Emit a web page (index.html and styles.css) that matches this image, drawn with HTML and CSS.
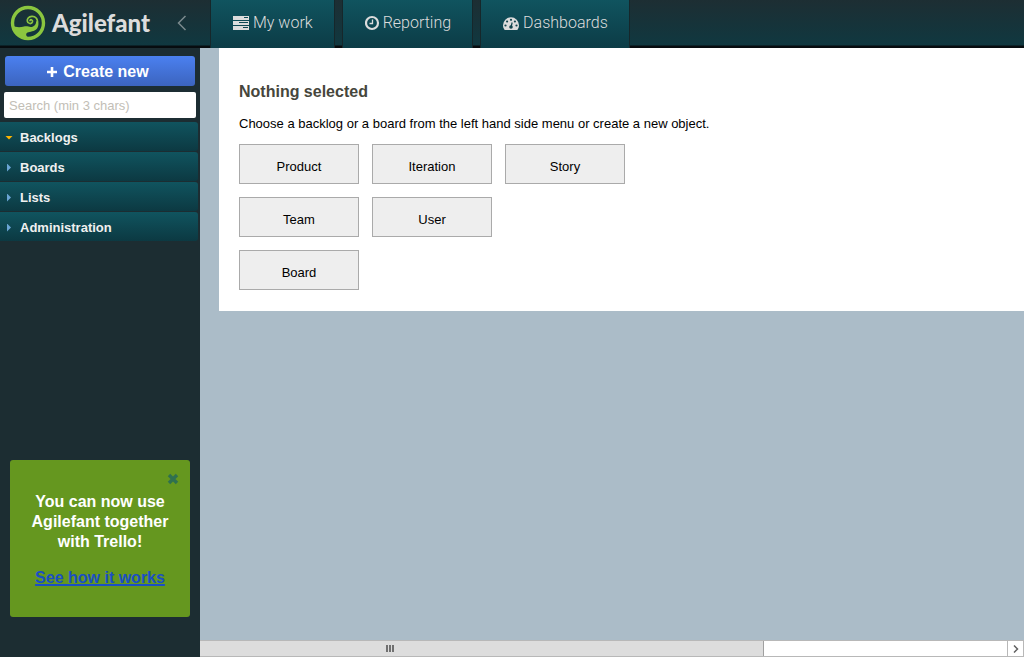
FILE: index.html
```html
<!DOCTYPE html>
<html lang="en">
<head>
<meta charset="utf-8">
<title>Agilefant</title>
<link rel="stylesheet" href="styles.css">
</head>
<body>
<header class="topbar">
  <div class="brand">
    <svg class="brand-mark" viewBox="0 0 36 36" aria-hidden="true">
      <circle cx="18" cy="18" r="15.500" fill="none" stroke="#8bc63f" stroke-width="3.400"/>
      <path d="M27 18.500C28.500 13.500 25 11.200 21.800 11.400C18.500 11.600 17 14 17.300 16.200C17.700 19 21.800 19.400 22.500 16.800C22.900 15 20.900 14 20 15.500" fill="none" stroke="#8bc63f" stroke-width="1.700" stroke-linecap="round"/>
      <path d="M2 20.500C6 22.500 10 22.500 14 21.500C18 20.700 20 23 23 21.500C25.500 20.200 26 18.500 26.200 16.500L28 15.500C29 19 28.500 23.500 25 25.200C21 27.200 17.500 26.500 16.300 28.800C15.600 30.800 17 32 20 33.500C10 35.500 3 29 2 20.500Z" fill="#8bc63f"/>
    </svg>
    <span class="brand-name">Agilefant</span>
    <button class="collapse" aria-label="Collapse menu">
      <svg viewBox="0 0 10 16" aria-hidden="true"><path d="M8.500 1L1.500 8L8.500 15" fill="none" stroke="#7b8a8d" stroke-width="1.500"/></svg>
    </button>
  </div>
  <nav class="tabs">
    <a class="tab" href="#work">
      <svg class="tab-icon" viewBox="0 0 17 16" aria-hidden="true"><path fill="#dcdcdc" fill-rule="evenodd" d="M0 1h16v4h-16zM11 2v1h4v-1zM0 6h16v4h-16zM6 7v1h9v-1zM0 11h16v4h-16zM10 12v1h5v-1z"/></svg>
      <span>My work</span>
    </a>
    <a class="tab" href="#reporting">
      <svg class="tab-icon clock" viewBox="0 0 15 16" aria-hidden="true"><circle cx="7" cy="8" r="6" fill="none" stroke="#dcdcdc" stroke-width="2.200"/><path d="M7.500 4.500V8.500H4.500" fill="none" stroke="#dcdcdc" stroke-width="1.300"/></svg>
      <span>Reporting</span>
    </a>
    <a class="tab" href="#dashboards">
      <svg class="tab-icon" viewBox="0 0 17 16" aria-hidden="true"><path d="M1.700 15C.5 13.500 0 12 0 10.300a8 8 0 0 1 16 0C16 12 15.500 13.500 14.300 15Z" fill="#dcdcdc"/><g fill="#12434c"><circle cx="2.500" cy="10.500" r="1.100"/><circle cx="4.100" cy="6.500" r="1.100"/><circle cx="8" cy="4.800" r="1.100"/><circle cx="11.900" cy="6.500" r="1.100"/><circle cx="13.500" cy="10.500" r="1.100"/><circle cx="8" cy="12" r="1.800"/></g><path d="M8 12L9.200 7.500" stroke="#12434c" stroke-width="1.200"/></svg>
      <span>Dashboards</span>
    </a>
  </nav>
</header>
<div class="workspace">
  <aside class="sidebar">
    <button class="create">
      <svg viewBox="0 0 10 10" aria-hidden="true"><path d="M5 0v10M0 5h10" stroke="#fff" stroke-width="2.600"/></svg>
      <span>Create new</span>
    </button>
    <input class="search" type="text" placeholder="Search (min 3 chars)" aria-label="Search">
    <nav class="menu">
      <a class="menu-item open" href="#backlogs">Backlogs</a>
      <a class="menu-item" href="#boards">Boards</a>
      <a class="menu-item" href="#lists">Lists</a>
      <a class="menu-item" href="#administration">Administration</a>
    </nav>
    <section class="promo">
      <button class="promo-close" aria-label="Close">
        <svg viewBox="0 0 12 12" aria-hidden="true"><path d="M2 2L10 10M10 2L2 10" stroke="#2f7050" stroke-width="3.400"/></svg>
      </button>
      <p class="promo-text">You can now use Agilefant together with Trello!</p>
      <a class="promo-link" href="#trello">See how it works</a>
    </section>
  </aside>
  <main class="content">
    <section class="panel">
      <h1>Nothing selected</h1>
      <p class="hint">Choose a backlog or a board from the left hand side menu or create a new object.</p>
      <div class="choices">
        <div class="choice-row"><button class="choice">Product</button><button class="choice">Iteration</button><button class="choice">Story</button></div>
        <div class="choice-row"><button class="choice">Team</button><button class="choice">User</button></div>
        <div class="choice-row"><button class="choice">Board</button></div>
      </div>
    </section>
    <div class="scrollbar">
      <div class="thumb"><i></i><i></i><i></i></div>
      <button class="scroll-right" aria-label="Scroll right">
        <svg viewBox="0 0 8 8" aria-hidden="true"><path d="M2 0.500L5.500 4L2 7.500" fill="none" stroke="#606060" stroke-width="1.500"/></svg>
      </button>
    </div>
  </main>
</div>
</body>
</html>
```
FILE: styles.css
```css
* { box-sizing: border-box; }
body {
  margin: 0;
  min-height: 100vh;
  display: flex;
  flex-direction: column;
  font-family: "Liberation Sans", Arial, sans-serif;
  font-size: 13px;
  color: #000;
  background: #abbcc8;
}
button { font: inherit; cursor: pointer; }
svg { display: block; }

.topbar {
  height: 48px;
  display: flex;
  background: linear-gradient(#1d2e33, #103840 45px, #070c0f 46px);
}
.brand {
  width: 210px;
  height: 45px;
  padding: 0 22px 0 10px;
  display: flex;
  align-items: center;
}
.brand-mark { width: 36px; height: 36px; }
.brand-name {
  margin-left: 6px;
  font: 900 24px/30px Lato, sans-serif;
  color: #dcdcdc;
}
.collapse {
  margin-left: auto;
  padding: 0;
  border: 0;
  background: none;
}
.collapse svg { width: 12px; height: 16px; }
.tabs { display: flex; gap: 7px; }
.tab {
  height: 48px;
  padding: 0 21px 2px 22px;
  display: flex;
  align-items: center;
  gap: 3px;
  border: solid #16272b;
  border-width: 0 1px;
  background: linear-gradient(#10545f, #0c3c46);
  color: #dcdcdc;
  font: 300 16px/20px Roboto, "Liberation Sans", sans-serif;
  text-decoration: none;
}
.tab-icon { width: 17px; height: 16px; }
.tab-icon.clock { width: 15px; }

.workspace { flex: 1; display: flex; }
.sidebar {
  width: 200px;
  padding: 8px 2px 40px 0;
  display: flex;
  flex-direction: column;
  background: #1c2d32;
}
.create {
  height: 30px;
  margin: 0 3px 0 5px;
  padding: 2px 4px 0 0;
  display: flex;
  align-items: center;
  justify-content: center;
  gap: 6px;
  border: 0;
  border-radius: 3px;
  background: linear-gradient(#4b80f0, #3c64be);
  color: #fff;
  font-size: 16px;
  font-weight: bold;
}
.create svg { width: 10px; height: 10px; }
.search {
  height: 26px;
  margin: 6px 2px 4px 4px;
  padding: 0 5px;
  border: 0;
  border-radius: 2px;
  background: #fff;
  font: 13px "Liberation Sans", Arial, sans-serif;
}
.search::placeholder { color: #c2beb6; opacity: 1; }
.menu { display: flex; flex-direction: column; gap: 1px; }
.menu-item {
  height: 29px;
  padding: 2px 0 0 7px;
  display: flex;
  align-items: center;
  border-radius: 0 3px 3px 0;
  background: linear-gradient(#10545f, #0c3942);
  color: #f0f0f0;
  font-weight: bold;
  text-decoration: none;
}
.menu-item::before {
  content: "";
  width: 4px;
  height: 8px;
  margin-right: 9px;
  background: #6aa5d5;
  clip-path: polygon(0 0, 100% 50%, 0 100%);
}
.menu-item.open { padding-left: 5px; }
.menu-item.open::before {
  width: 8px;
  height: 4px;
  margin-right: 7px;
  background: #fdb400;
  clip-path: polygon(0 0, 100% 0, 50% 100%);
}
.promo {
  position: relative;
  margin: auto 8px 0 10px;
  padding: 32px 20px 29px;
  border-radius: 3px;
  background: #65971f;
  text-align: center;
  font-size: 16px;
  font-weight: bold;
  line-height: 20px;
}
.promo-close {
  position: absolute;
  top: 13px;
  right: 11px;
  padding: 0;
  border: 0;
  background: none;
}
.promo-close svg { width: 12px; height: 12px; }
.promo-text { margin: 0 0 16px; color: #fff; }
.promo-link { color: #1b4fc4; text-decoration-thickness: 2px; }

.content {
  flex: 1;
  min-width: 0;
  display: flex;
  flex-direction: column;
  justify-content: space-between;
}
.panel {
  margin-left: 19px;
  padding: 34px 20px 20px;
  background: #fff;
}
h1 { margin: 0; font-size: 16px; line-height: 20px; color: #46463c; }
.hint { margin: 13px 0 12px; line-height: 17px; }
.choices { display: flex; flex-direction: column; gap: 13px; padding-bottom: 1px; }
.choice-row { display: flex; gap: 13px; }
.choice {
  width: 120px;
  height: 40px;
  padding: 4px 0 0;
  border: 1px solid #aaa;
  background: #eee;
  color: #000;
}
.scrollbar {
  height: 17px;
  display: flex;
  justify-content: space-between;
  border: solid #b8b8b8;
  border-width: 1px 0;
  background: #fff;
}
.thumb {
  width: 68.4%;
  padding-right: 182px;
  display: flex;
  align-items: center;
  justify-content: center;
  gap: 1px;
  border-right: 1px solid #a0a0a0;
  background: #ddd;
}
.thumb i { width: 2px; height: 7px; background: #707070; }
.scroll-right {
  width: 17px;
  padding: 0 0 0 4px;
  border: solid #b8b8b8;
  border-width: 0 1px;
  background: #fff;
}
.scroll-right svg { width: 8px; height: 8px; }
```
